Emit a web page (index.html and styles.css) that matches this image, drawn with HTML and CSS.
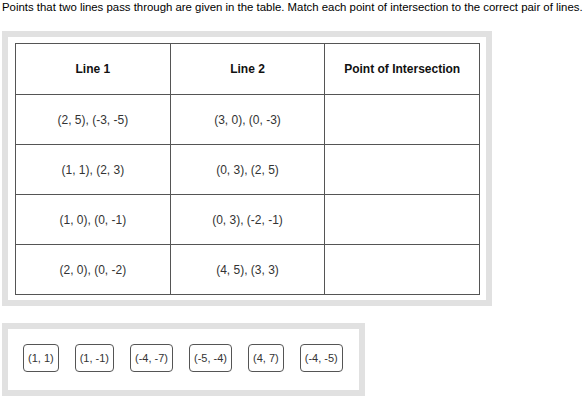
FILE: index.html
```html
<!DOCTYPE html>
<html>
<head>
<meta charset="utf-8">
<link rel="stylesheet" href="styles.css">
</head>
<body>
<p class="prompt">Points that two lines pass through are given in the table. Match each point of intersection to the correct pair of lines.</p>
<div class="frame table-frame">
  <table class="grid">
    <thead>
      <tr><th>Line 1</th><th>Line 2</th><th>Point of Intersection</th></tr>
    </thead>
    <tbody>
      <tr><td>(2, 5), (-3, -5)</td><td>(3, 0), (0, -3)</td><td></td></tr>
      <tr><td>(1, 1), (2, 3)</td><td>(0, 3), (2, 5)</td><td></td></tr>
      <tr><td>(1, 0), (0, -1)</td><td>(0, 3), (-2, -1)</td><td></td></tr>
      <tr><td>(2, 0), (0, -2)</td><td>(4, 5), (3, 3)</td><td></td></tr>
    </tbody>
  </table>
</div>
<div class="frame chip-frame">
  <span class="chip">(1, 1)</span>
  <span class="chip">(1, -1)</span>
  <span class="chip">(-4, -7)</span>
  <span class="chip">(-5, -4)</span>
  <span class="chip">(4, 7)</span>
  <span class="chip">(-4, -5)</span>
</div>
</body>
</html>
```
FILE: styles.css
```css
html, body {
  margin: 0;
  padding: 0;
  background: #fff;
}
body {
  padding: 0 2px;
  font-family: "Liberation Sans", Arial, sans-serif;
  color: #222;
}
.prompt {
  margin: 0;
  padding-top: 1px;
  font-size: 11.4px;
  line-height: 13px;
  color: #000;
  white-space: nowrap;
}
.frame {
  border: 6px solid #e1e1e1;
  background: #fff;
  box-sizing: border-box;
}
.table-frame {
  margin-top: 17px;
  width: 490px;
  padding: 6px 6px 5px 7px;
}
.grid {
  width: 465px;
  border-collapse: collapse;
  table-layout: fixed;
  border: 1px solid #1e1e1e;
}
.grid th, .grid td {
  border: 1px solid #555;
  text-align: center;
  font-size: 12px;
  color: #333;
  padding: 0;
}
.grid th {
  height: 50px;
  font-weight: bold;
  color: #111;
}
.grid td {
  height: 49px;
}
.chip-frame {
  margin-top: 17px;
  width: 363px;
  padding: 15px 0 18px 15px;
  display: flex;
  gap: 16px;
}
.chip {
  display: inline-block;
  border: 1px solid #555;
  border-radius: 4px;
  padding: 0 4px;
  height: 26px;
  line-height: 26px;
  font-size: 11px;
  color: #333;
}
```
